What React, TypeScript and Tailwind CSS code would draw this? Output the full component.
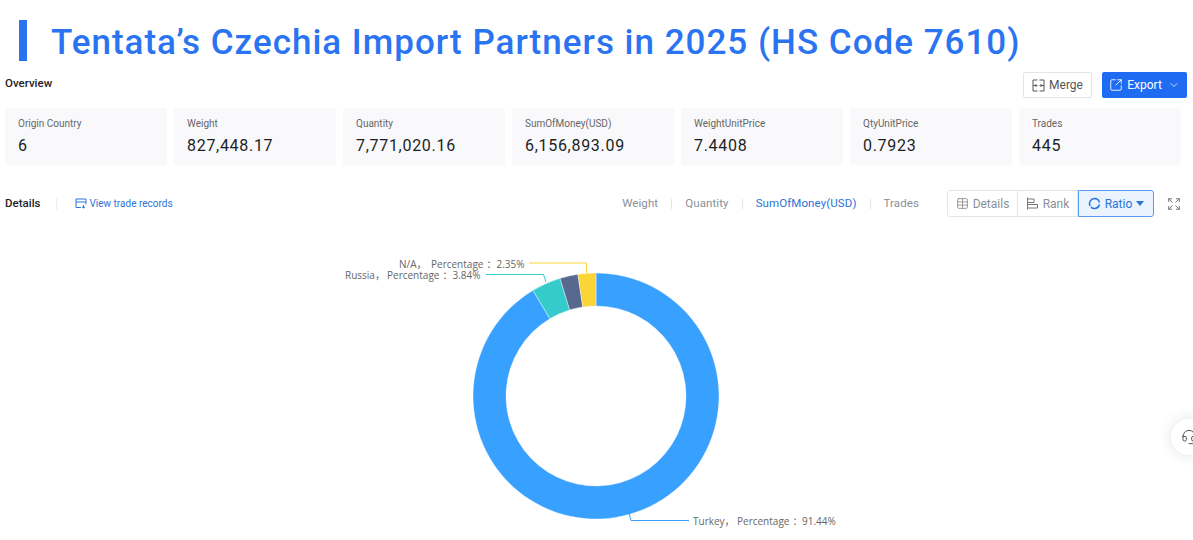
import React from 'react';
import { ChevronDown, Expand, SquareArrowOutUpRight, Table, Headset } from 'lucide-react';

const stats = [
  { label: 'Origin Country', value: '6' },
  { label: 'Weight', value: '827,448.17' },
  { label: 'Quantity', value: '7,771,020.16' },
  { label: 'SumOfMoney(USD)', value: '6,156,893.09' },
  { label: 'WeightUnitPrice', value: '7.4408' },
  { label: 'QtyUnitPrice', value: '0.7923' },
  { label: 'Trades', value: '445' }
];

const metrics = ['Weight', 'Quantity', 'SumOfMoney(USD)', 'Trades'];

// donut slices, clockwise from 12 o'clock
const slices = [
  { pct: 91.44, color: '#38a0ff' },
  { pct: 3.84, color: '#36cbcb' },
  { pct: 2.37, color: '#58698f' },
  { pct: 2.35, color: '#fbd437' }
];

function polar(cx: number, cy: number, r: number, pct: number) {
  const a = (pct / 100) * Math.PI * 2;
  return [cx + r * Math.sin(a), cy - r * Math.cos(a)];
}

function slicePath(from: number, to: number) {
  const cx = 596;
  const cy = 155;
  const [x1, y1] = polar(cx, cy, 123, from);
  const [x2, y2] = polar(cx, cy, 123, to);
  const [x3, y3] = polar(cx, cy, 90, to);
  const [x4, y4] = polar(cx, cy, 90, from);
  const big = to - from > 50 ? 1 : 0;
  return `M${x1} ${y1}A123 123 0 ${big} 1 ${x2} ${y2}L${x3} ${y3}A90 90 0 ${big} 0 ${x4} ${y4}Z`;
}

function Donut() {
  let start = 0;
  return (
    <svg width="1193" height="323" viewBox="0 0 1193 323" className="block" style={{ fontFamily: '"Open Sans", "Noto Sans CJK SC", sans-serif' }}>
      {slices.map((s) => {
        const d = slicePath(start, start + s.pct);
        start += s.pct;
        return <path key={s.color} d={d} fill={s.color} stroke="#fff" strokeWidth="0.4" />;
      })}
      <path d="M529 22H586.500V32" fill="none" stroke="#fbd437" strokeWidth="1" />
      <path d="M486 33.500H543.500L546 41" fill="none" stroke="#36cbcb" strokeWidth="1" />
      <path d="M629 272L631 279.500H689" fill="none" stroke="#38a0ff" strokeWidth="1" />
      <text y="26.500" fontSize="10" fill="#666">
        <tspan x="399">N/A，</tspan>
        <tspan x="431">Percentage</tspan>
        <tspan x="486.500">：</tspan>
        <tspan x="496.500">2.35%</tspan>
      </text>
      <text y="37.500" fontSize="10" fill="#666">
        <tspan x="345">Russia，</tspan>
        <tspan x="387">Percentage</tspan>
        <tspan x="442.500">：</tspan>
        <tspan x="452.500">3.84%</tspan>
      </text>
      <text y="284" fontSize="10" fill="#666">
        <tspan x="693">Turkey，</tspan>
        <tspan x="737">Percentage</tspan>
        <tspan x="792.500">：</tspan>
        <tspan x="802">91.44%</tspan>
      </text>
    </svg>
  );
}

export default function App() {
  return (
    <div className="relative w-[1193px] h-[540px] overflow-hidden bg-white font-['Roboto',sans-serif]">
      {/* Title */}
      <div className="flex items-center pl-[19px] pt-5 h-[61px]">
        <div className="w-2 h-[41px] bg-[#2b74f1]" />
        <h1 className="ml-6 mt-1 text-[35px] leading-[41px] font-medium tracking-[1px] text-[#2b74f1] whitespace-nowrap">
          Tentata’s Czechia Import Partners in 2025 (HS Code 7610)
        </h1>
      </div>

      {/* Overview */}
      <div className="flex justify-between pl-[5px] pr-1.5 mt-[11px] h-[26px]">
        <div className="text-[11.500px] font-medium text-[#1f2329] leading-[22px]">Overview</div>
        <div className="flex gap-[10px]">
          <button className="flex items-center justify-center gap-1 w-[69px] h-[26px] border border-[#e3e5ea] rounded-[2px] text-xs text-[#555]">
            <svg width="13" height="13" viewBox="0 0 13 13" fill="none" stroke="#555" strokeWidth="1">
              <path d="M5.500 1H1V12H5.500M7.500 1H12V12H7.500M1 6.500H4.500M8.500 6.500H12M3.500 5L5 6.500L3.500 8M9.500 5L8 6.500L9.500 8" />
            </svg>
            Merge
          </button>
          <button className="flex items-center justify-center gap-1 w-[85px] h-[26px] bg-[#1f6bf2] rounded-[2px] text-xs text-white">
            <SquareArrowOutUpRight size={14} strokeWidth={1.5} />
            Export
            <ChevronDown size={12} strokeWidth={1.5} className="ml-0.5" />
          </button>
        </div>
      </div>

      {/* Stat cards */}
      <div className="grid grid-cols-7 gap-[7px] pl-[5px] pr-3 mt-2.5">
        {stats.map((s) => (
          <div key={s.label} className="h-[57px] bg-[#f9f9fb] rounded-[2px] pl-[13px] pt-[9px]">
            <div className="text-[10px] leading-[14px] text-[#666]">{s.label}</div>
            <div className="mt-[5px] text-base leading-5 font-[450] tracking-[0.700px] text-[#1b1f26]">{s.value}</div>
          </div>
        ))}
      </div>

      {/* Details toolbar */}
      <div className="flex items-center pl-[5px] pr-3 mt-[25px] h-[27px]">
        <div className="text-[11.500px] font-medium text-[#1f2329]">Details</div>
        <div className="w-px h-3 bg-[#eceef2] ml-[16px]" />
        <a className="flex items-center gap-0.5 ml-[18px] text-[10px] text-[#2b74d8]">
          <svg width="12" height="11" viewBox="0 0 12 11" fill="none" stroke="#2b74d8" strokeWidth="1">
            <path d="M6 9.500H1V1H11V6.500M1 4H11M8.500 7V10M8.500 10L7 8.800M8.500 10L10 8.800" />
          </svg>
          View trade records
        </a>
        <div className="flex items-center ml-auto text-[11.500px] tracking-[0.100px] text-[#8a8f99]">
          {metrics.map((m, i) => (
            <React.Fragment key={m}>
              {i > 0 && <div className="w-px h-2.5 bg-[#e3e5ea] mx-[13px]" />}
              <span className={m === 'SumOfMoney(USD)' ? 'text-[#2b74d8]' : ''}>{m}</span>
            </React.Fragment>
          ))}
        </div>
        <div className="flex ml-[28px] h-[27px] text-xs text-[#8a8f99]">
          <div className="flex items-center gap-1 w-[71px] justify-center border border-[#e3e5ea] rounded-l-[3px]">
            <Table size={13} strokeWidth={1.3} className="text-[#777]" />
            Details
          </div>
          <div className="flex items-center gap-1 w-[60px] justify-center border-y border-r border-[#e3e5ea]">
            <svg width="13" height="13" viewBox="0 0 13 13" fill="none" stroke="#777" strokeWidth="1">
              <path d="M1.500 0.500V12.500M1.500 2H8V5.500H1.500M1.500 7.500H11.500V11H1.500" />
            </svg>
            Rank
          </div>
          <div className="flex items-center gap-1 w-[76px] justify-center border border-[#5b9cf0] bg-[#eaf3fe] rounded-r-[3px] text-[#2b74d8]">
            <svg width="13" height="13" viewBox="0 0 13 13" fill="none" stroke="#2b74d8" strokeWidth="1.500">
              <path d="M6.500 1.500A5 5 0 0 1 11.400 5.500M11.400 7.500A5 5 0 0 1 3 10.100M2.200 9A5 5 0 0 1 6.500 1.500" />
            </svg>
            Ratio
            <svg width="8" height="5" viewBox="0 0 8 5" fill="#2b74d8">
              <path d="M0 0H8L4 5Z" />
            </svg>
          </div>
        </div>
        <Expand size={14} strokeWidth={1.5} className="ml-[13px] text-[#666]" />
      </div>

      {/* Chart */}
      <div className="mt-[24px]">
        <Donut />
      </div>

      {/* Floating help */}
      <div className="absolute left-[1171px] top-[419px] flex items-center justify-center w-9 h-9 rounded-full bg-white shadow-[0_0_14px_rgba(30,50,90,0.14)]">
        <Headset size={16} strokeWidth={1.5} className="text-[#555]" />
      </div>
    </div>
  );
}
